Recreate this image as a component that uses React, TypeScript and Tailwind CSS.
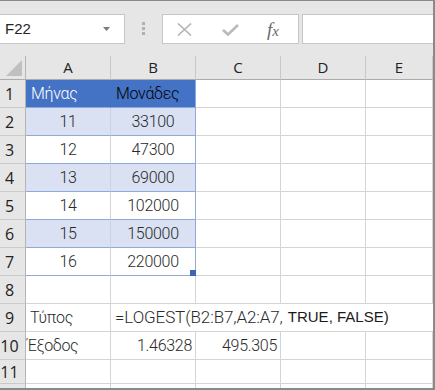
import React from "react";

const CELL_FONT = "font-['Roboto','Liberation_Sans',sans-serif] font-light text-[16px] tracking-[-0.3px] text-[#2a2a2a]";
const GRID = "border-b border-r border-[#d4d4d4]";

function RowHead({ n }: { n: string }) {
  return (
    <div className="bg-[#e6e6e6] border-b border-r border-b-[#cacaca] border-r-[#b4b4b4] flex items-center justify-center pr-[6px] font-['Open_Sans','Liberation_Sans',sans-serif] text-[16px] text-[#222]">
      {n}
    </div>
  );
}

function ColHead({ c }: { c: string }) {
  return (
    <div className="bg-[#e6e6e6] border-b border-r border-b-[#ababab] border-r-[#c8c8c8] flex items-center justify-center font-['Open_Sans','Liberation_Sans',sans-serif] text-[15px] text-[#222]">
      {c}
    </div>
  );
}

const data: [string, string][] = [
  ["11", "33100"],
  ["12", "47300"],
  ["13", "69000"],
  ["14", "102000"],
  ["15", "150000"],
  ["16", "220000"],
];

export default function App() {
  return (
    <div className="w-[435px] h-[390px] overflow-hidden bg-white border-t border-r-2 border-b-2 border-[#8a8a8a] flex flex-col">
      {/* toolbar */}
      <div className="h-[55px] shrink-0 bg-[#e6e6e6] flex items-start pt-[13px]">
        <div className="w-[125px] h-[30px] bg-white border border-l-0 border-[#c6c6c6] flex items-center justify-between pl-[5px] pr-[14px]">
          <span className="font-['Liberation_Sans',sans-serif] text-[15px] text-[#262626]">F22</span>
          <svg width="7" height="4" viewBox="0 0 7 4">
            <path d="M0 0 L7 0 L3.5 4 Z" fill="#7a7a7a" />
          </svg>
        </div>
        <div className="ml-[17px] mt-[8px] flex flex-col gap-[2px]">
          <div className="w-[3px] h-[3px] bg-[#b0b0b0]" />
          <div className="w-[3px] h-[3px] bg-[#b0b0b0]" />
          <div className="w-[3px] h-[3px] bg-[#b0b0b0]" />
        </div>
        <div className="ml-[17px] w-[137px] h-[30px] bg-white border border-[#c6c6c6] flex items-center">
          <svg className="ml-[14px]" width="15" height="13" viewBox="0 0 15 13">
            <path d="M1 0.5 L14 12.5 M14 0.5 L1 12.5" stroke="#b4b4b4" strokeWidth="1.6" fill="none" />
          </svg>
          <svg className="ml-[30px] mt-[2px]" width="17" height="12" viewBox="0 0 17 12">
            <path d="M1 6 L6 10.5 L16 1" stroke="#bababa" strokeWidth="2.6" fill="none" />
          </svg>
          <span className="ml-[28px] font-['Liberation_Serif',serif] italic text-[#6b6b6b] leading-none">
            <span className="text-[19px]">f</span>
            <span className="text-[15px]">x</span>
          </span>
        </div>
        <div className="ml-[3px] flex-1 h-[30px] bg-white border border-r-0 border-[#c6c6c6]" />
      </div>

      {/* grid */}
      <div className="grid grid-cols-[26px_85px_85px_85px_85px_1fr] grid-rows-[24px_repeat(10,28px)_24px_4px] flex-1">
        {/* header row */}
        <div className="bg-[#e6e6e6] border-b border-r border-b-[#ababab] border-r-[#b4b4b4] flex items-end justify-end pr-[3px] pb-[3px]">
          <svg width="16" height="16" viewBox="0 0 16 16">
            <path d="M16 0 L16 16 L0 16 Z" fill="#c0c0c0" />
          </svg>
        </div>
        <ColHead c="A" />
        <ColHead c="B" />
        <ColHead c="C" />
        <ColHead c="D" />
        <ColHead c="E" />

        {/* row 1 */}
        <RowHead n="1" />
        <div className={`bg-[#4472c4] border-b border-r border-b-[#8ea9db] border-r-[#4472c4] flex items-center pl-[5px] ${CELL_FONT} !text-white`}>Μήνας</div>
        <div className={`bg-[#4472c4] border-b border-r border-b-[#8ea9db] border-r-[#8ea9db] flex items-center pl-[5px] ${CELL_FONT} !text-black`}>Μονάδες</div>
        <div className={GRID} />
        <div className={GRID} />
        <div className={GRID} />

        {data.map(([a, b], i) => {
          const shaded = i % 2 === 0;
          const last = i === data.length - 1;
          return (
            <React.Fragment key={a}>
              <RowHead n={String(i + 2)} />
              <div
                className={`${shaded ? "bg-[#d9e1f2] border-r-[#c9d3e8]" : "bg-white border-r-[#d4d4d4]"} border-b border-r border-b-[#8ea9db] flex items-center justify-center ${CELL_FONT}`}
              >
                {a}
              </div>
              <div
                className={`${shaded ? "bg-[#d9e1f2]" : "bg-white"} relative border-b border-r border-b-[#8ea9db] border-r-[#8ea9db] flex items-center justify-center ${CELL_FONT}`}
              >
                {b}
                {last && <div className="absolute right-[-1px] bottom-[-1px] w-[6px] h-[6px] bg-[#3f63b5]" />}
              </div>
              <div className={GRID} />
              <div className={GRID} />
              <div className={GRID} />
            </React.Fragment>
          );
        })}

        {/* row 8 */}
        <RowHead n="8" />
        <div className={GRID} />
        <div className={GRID} />
        <div className={GRID} />
        <div className={GRID} />
        <div className={GRID} />

        {/* row 9 */}
        <RowHead n="9" />
        <div className={`${GRID} flex items-center pl-[4px] ${CELL_FONT}`}>Τύπος</div>
        <div className={`col-span-4 border-b border-[#d4d4d4] flex items-center pl-[4px] whitespace-nowrap ${CELL_FONT}`}>
          <span className="text-[17px] tracking-[-0.1px]">=LOGEST(B2:B7,A2:A7,</span>
          <span className="font-['Liberation_Sans',sans-serif] font-normal text-[15px] tracking-normal text-[#1a1a1a] ml-[5px]">TRUE, FALSE)</span>
        </div>

        {/* row 10 */}
        <RowHead n="10" />
        <div className={`${GRID} flex items-center pl-[1px] ${CELL_FONT}`}>Έξοδος</div>
        <div className={`${GRID} flex items-center justify-end pr-[3px] ${CELL_FONT}`}>1.46328</div>
        <div className={`${GRID} flex items-center justify-end pr-[3px] ${CELL_FONT}`}>495.305</div>
        <div className={GRID} />
        <div className={GRID} />

        {/* row 11 */}
        <RowHead n="11" />
        <div className={GRID} />
        <div className={GRID} />
        <div className={GRID} />
        <div className={GRID} />
        <div className={GRID} />

        {/* row 12 partial */}
        <div className="bg-[#e6e6e6] border-r border-r-[#b4b4b4]" />
        <div className="border-r border-[#d4d4d4]" />
        <div className="border-r border-[#d4d4d4]" />
        <div className="border-r border-[#d4d4d4]" />
        <div className="border-r border-[#d4d4d4]" />
        <div className="border-r border-[#d4d4d4]" />
      </div>
    </div>
  );
}
